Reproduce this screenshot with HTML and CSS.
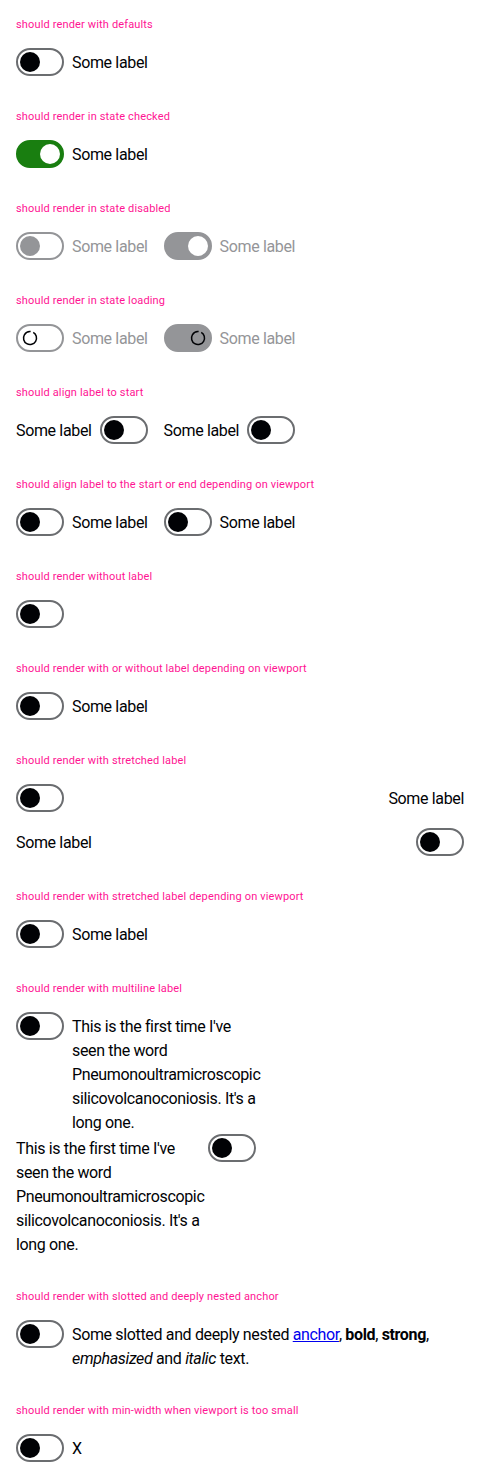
FILE: index.html
```html
<!DOCTYPE html>
<html lang="en">
<head>
<meta charset="utf-8">
<title>Switch</title>
<link rel="stylesheet" href="styles.css">
</head>
<body>

<section class="pg">
  <p class="pg-title">should render with defaults</p>
  <div class="row">
    <label class="sw"><span class="track"><span class="knob"></span></span><span class="lbl">Some label</span></label>
  </div>
</section>

<section class="pg">
  <p class="pg-title">should render in state checked</p>
  <div class="row">
    <label class="sw is-checked"><span class="track"><span class="knob"></span></span><span class="lbl">Some label</span></label>
  </div>
</section>

<section class="pg">
  <p class="pg-title">should render in state disabled</p>
  <div class="row">
    <label class="sw is-disabled"><span class="track"><span class="knob"></span></span><span class="lbl">Some label</span></label>
    <label class="sw is-disabled is-checked"><span class="track"><span class="knob"></span></span><span class="lbl">Some label</span></label>
  </div>
</section>

<section class="pg">
  <p class="pg-title">should render in state loading</p>
  <div class="row">
    <label class="sw is-loading"><span class="track"><span class="knob"><svg class="spin" viewBox="0 0 16 16" width="16" height="16"><circle cx="8" cy="8" r="6.5" fill="none" stroke="#010205" stroke-width="1.5" stroke-dasharray="37 4" transform="rotate(-60 8 8)"/></svg></span></span><span class="lbl">Some label</span></label>
    <label class="sw is-loading is-checked"><span class="track"><span class="knob"><svg class="spin" viewBox="0 0 16 16" width="16" height="16"><circle cx="8" cy="8" r="6.5" fill="none" stroke="#010205" stroke-width="1.5" stroke-dasharray="37 4" transform="rotate(-60 8 8)"/></svg></span></span><span class="lbl">Some label</span></label>
  </div>
</section>

<section class="pg">
  <p class="pg-title">should align label to start</p>
  <div class="row">
    <label class="sw"><span class="lbl">Some label</span><span class="track"><span class="knob"></span></span></label>
    <label class="sw"><span class="lbl">Some label</span><span class="track"><span class="knob"></span></span></label>
  </div>
</section>

<section class="pg">
  <p class="pg-title">should align label to the start or end depending on viewport</p>
  <div class="row">
    <label class="sw"><span class="track"><span class="knob"></span></span><span class="lbl">Some label</span></label>
    <label class="sw"><span class="track"><span class="knob"></span></span><span class="lbl">Some label</span></label>
  </div>
</section>

<section class="pg">
  <p class="pg-title">should render without label</p>
  <div class="row">
    <label class="sw"><span class="track"><span class="knob"></span></span></label>
  </div>
</section>

<section class="pg">
  <p class="pg-title">should render with or without label depending on viewport</p>
  <div class="row">
    <label class="sw"><span class="track"><span class="knob"></span></span><span class="lbl">Some label</span></label>
  </div>
</section>

<section class="pg">
  <p class="pg-title">should render with stretched label</p>
  <div class="stack">
    <label class="sw sw-stretch"><span class="track"><span class="knob"></span></span><span class="lbl">Some label</span></label>
    <label class="sw sw-stretch"><span class="lbl">Some label</span><span class="track"><span class="knob"></span></span></label>
  </div>
</section>

<section class="pg">
  <p class="pg-title">should render with stretched label depending on viewport</p>
  <div class="row">
    <label class="sw"><span class="track"><span class="knob"></span></span><span class="lbl">Some label</span></label>
  </div>
</section>

<section class="pg">
  <p class="pg-title">should render with multiline label</p>
  <div class="narrow">
    <label class="sw"><span class="track"><span class="knob"></span></span><span class="lbl lbl-wrap">This is the first time I've seen the word Pneumonoultramicroscopic<wbr>silicovolcanoconiosis. It's a long one.</span></label>
    <label class="sw"><span class="lbl lbl-wrap">This is the first time I've seen the word Pneumonoultramicroscopic<wbr>silicovolcanoconiosis. It's a long one.</span><span class="track"><span class="knob"></span></span></label>
  </div>
</section>

<section class="pg">
  <p class="pg-title">should render with slotted and deeply nested anchor</p>
  <div class="row">
    <label class="sw"><span class="track"><span class="knob"></span></span><span class="lbl">Some slotted and deeply nested <a href="#">anchor</a>, <b>bold</b>, <strong>strong</strong>, <em>emphasized</em> and <i>italic</i> text.</span></label>
  </div>
</section>

<section class="pg">
  <p class="pg-title">should render with min-width when viewport is too small</p>
  <div class="row">
    <label class="sw"><span class="track"><span class="knob"></span></span><span class="lbl">X</span></label>
  </div>
</section>

</body>
</html>
```

FILE: styles.css
```css
html, body {
  margin: 0;
  padding: 0;
  background: #ffffff;
}

body {
  font-family: Roboto, "Liberation Sans", Arial, sans-serif;
  color: #010205;
}

.pg {
  padding: 16px;
}

.pg-title {
  margin: 0 0 15px;
  padding-top: 1px;
  font-size: 11px;
  line-height: 16px;
  letter-spacing: 0.15px;
  color: #ff1493;
}

.row {
  display: flex;
  flex-wrap: wrap;
  gap: 16px;
}

.stack {
  display: flex;
  flex-direction: column;
  gap: 16px;
}

.narrow {
  width: 240px;
  display: flex;
  flex-direction: column;
}

.sw {
  display: flex;
  align-items: flex-start;
  gap: 8px;
  cursor: pointer;
}

.sw-stretch {
  justify-content: space-between;
}

.track {
  flex: 0 0 auto;
  position: relative;
  box-sizing: border-box;
  width: 48px;
  height: 28px;
  border: 2px solid #6b6d70;
  border-radius: 14px;
  background: #ffffff;
}

.knob {
  position: absolute;
  top: 2px;
  left: 2px;
  width: 20px;
  height: 20px;
  border-radius: 50%;
  background: #010205;
  display: flex;
  align-items: center;
  justify-content: center;
}

.lbl {
  min-width: 0;
  font-size: 16px;
  line-height: 24px;
  letter-spacing: -0.35px;
  padding-top: 3px;
  margin-bottom: -1px;
  color: #010205;
}

.lbl-wrap {
  flex: 1 1 0;
}

.lbl a {
  color: #0000ee;
  text-decoration: underline;
}

.lbl b,
.lbl strong {
  font-weight: 700;
}

/* checked */
.is-checked .track {
  background: #197e10;
  border-color: #197e10;
}

.is-checked .knob {
  left: 22px;
  background: #ffffff;
}

/* disabled */
.is-disabled,
.is-loading {
  cursor: not-allowed;
}

.is-disabled .track,
.is-loading .track {
  border-color: #949598;
}

.is-disabled .knob {
  background: #949598;
}

.is-disabled .lbl,
.is-loading .lbl {
  color: #949598;
}

.is-disabled.is-checked .track,
.is-loading.is-checked .track {
  background: #949598;
  border-color: #949598;
}

.is-disabled.is-checked .knob {
  background: #ffffff;
}

/* loading */
.is-loading .knob {
  background: #ffffff;
}

.is-loading.is-checked .knob {
  background: transparent;
}

.spin {
  display: block;
}
```
